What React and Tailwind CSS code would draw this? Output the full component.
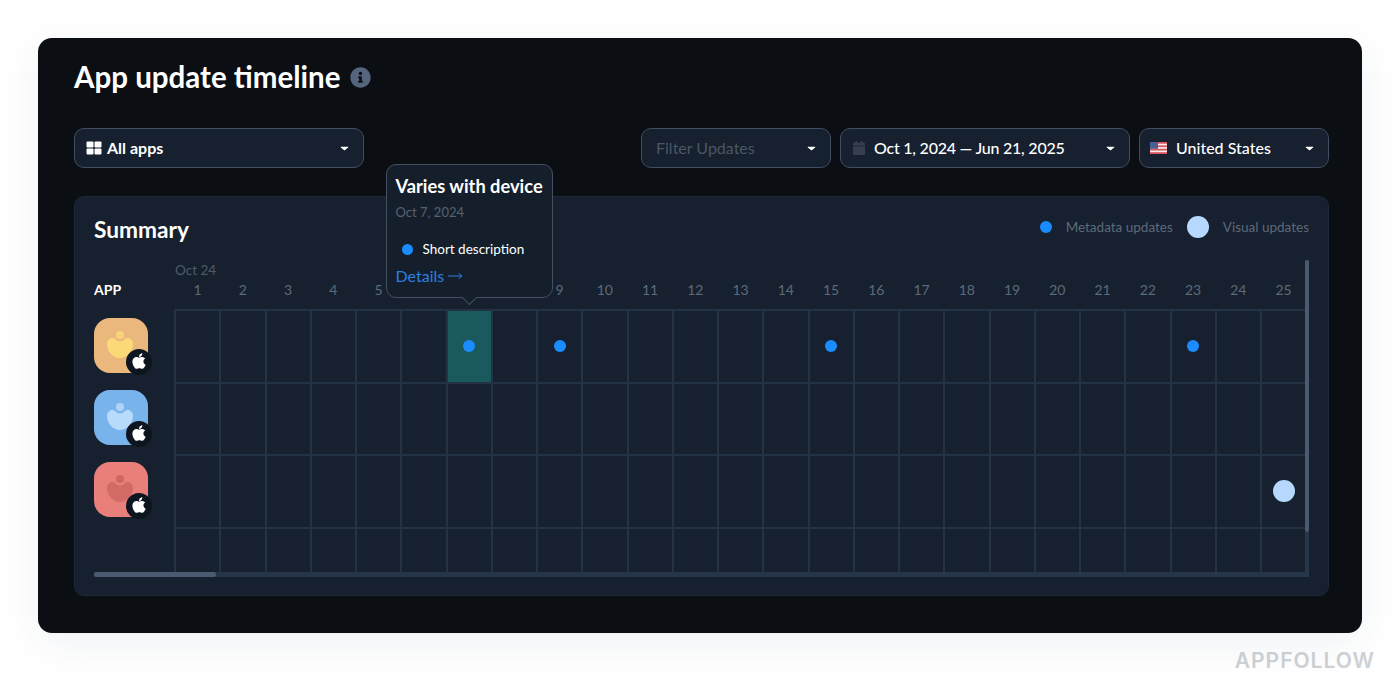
import { FaApple, FaInfoCircle, FaCalendar } from 'react-icons/fa';
import { MoveRight } from 'lucide-react';

const days = Array.from({ length: 25 }, (_, i) => i + 1);

// these day labels sit under the open tooltip
const coveredDays = [6, 7, 8];

const apps = [
    { bg: 'bg-[#eab87d]', head: '#f7d27a', body: '#fbd976', id: 'orange' },
    { bg: 'bg-[#79b3ec]', head: '#aed4f8', body: '#b9dbfb', id: 'blue' },
    { bg: 'bg-[#e87f7a]', head: '#cf6660', body: '#d26a65', id: 'red' },
];

// row index -> day -> dot kind
const updates = [
    { 7: 'meta', 9: 'meta', 15: 'meta', 23: 'meta' },
    {},
    { 25: 'visual' },
    {},
];

const rowHeights = ['h-[72.5px]', 'h-[72.5px]', 'h-[72.5px]', 'h-[46px]'];

function Caret() {
    return (
        <svg width="9" height="5" viewBox="0 0 10 6" className="shrink-0">
            <path d="M1 .8h8c.5 0 .8.6.4 1L5.4 5.2c-.2.2-.6.2-.8 0L.6 1.8C.2 1.4.5.8 1 .8z" fill="#ffffff" />
        </svg>
    );
}

function Select({ width, children }) {
    return (
        <div className={`${width} h-10 flex items-center justify-between pl-3 pr-[14px] rounded-[10px] bg-[#16202e] border border-[#414e60]`}>
            <div className="flex items-center text-[16px] whitespace-nowrap">{children}</div>
            <Caret />
        </div>
    );
}

function AppIcon({ app }) {
    return (
        <div className={`relative w-[54px] h-[55px] rounded-[16px] ${app.bg}`}>
            <svg width="54" height="55" viewBox="0 0 54 55" className="absolute inset-0">
                <circle cx="26" cy="17" r="4" fill={app.head} />
                <path d="M13 26c0-4 3-6.500 6-6 2.500.4 3 3.500 7 3.500s4.500-3.100 7-3.500c3-.5 6 2 6 6 0 7.500-6 14-13 14S13 33.500 13 26z" fill={app.body} />
            </svg>
            <div className="absolute left-[32px] top-[31px] w-[26px] h-[26px] rounded-full bg-[#0d151f] flex items-center justify-center">
                <FaApple className="text-white text-[18px] mb-px" />
            </div>
        </div>
    );
}

function Flag() {
    return (
        <svg width="17" height="12" viewBox="0 0 17 12" className="shrink-0 -ml-[2px]">
            <rect width="17" height="12" rx="1.500" fill="#f3ecec" />
            <rect y="0" width="17" height="1.700" fill="#d9525c" />
            <rect y="3.400" width="17" height="1.700" fill="#d9525c" />
            <rect y="6.800" width="17" height="1.700" fill="#d9525c" />
            <rect y="10.200" width="17" height="1.800" fill="#d9525c" />
            <rect width="8" height="6.800" fill="#4a5f96" />
        </svg>
    );
}

export default function App() {
    return (
        <div className="w-[1400px] h-[697px] overflow-hidden bg-white font-['Lato',sans-serif] pt-[38px] px-[38px]">
            <div className="relative h-[595px] rounded-[14px] bg-[#0b0e13] pt-[22px] pl-[36px] pr-[33px] shadow-[0_10px_40px_rgba(30,50,90,0.07)]">
                <div className="flex items-center gap-[10px] h-[34px]">
                    <h1 className="text-[29.5px] leading-[34px] font-bold text-white">App update timeline</h1>
                    <FaInfoCircle className="text-[#55657d] text-[21px]" />
                </div>

                <div className="mt-[34px] flex items-center">
                    <Select width="w-[290px]">
                        <svg width="16" height="14" viewBox="0 0 16 14" className="mr-[5px] -ml-[1px]" fill="#ffffff">
                            <rect x="0.500" y="0.500" width="7" height="6" rx="1" />
                            <rect x="8.500" y="0.500" width="7" height="6" rx="1" />
                            <rect x="0.500" y="7.500" width="7" height="6" rx="1" />
                            <rect x="8.500" y="7.500" width="7" height="6" rx="1" />
                        </svg>
                        <span className="font-bold text-white">All apps</span>
                    </Select>
                    <div className="ml-auto flex items-center gap-[9px]">
                        <Select width="w-[190px]">
                            <span className="pl-[2px] text-[#4a5666]">Filter Updates</span>
                        </Select>
                        <Select width="w-[290px]">
                            <FaCalendar className="text-[#353f4e] text-[14px] -ml-px mr-[8px]" />
                            <span className="tracking-[-0.23px] font-medium text-white">Oct 1, 2024 — Jun 21, 2025</span>
                        </Select>
                        <Select width="w-[190px]">
                            <Flag />
                            <span className="ml-[9px] font-medium text-white">United States</span>
                        </Select>
                    </div>
                </div>

                <div className="mt-[28px] h-[400px] rounded-[10px] bg-[#16202e] border border-[#1c2938] pl-[19px] pr-[19px]">
                    <div className="h-[63px] pt-[20px] flex items-start justify-between">
                        <h2 className="text-[22.7px] leading-[26px] font-bold text-white">Summary</h2>
                        <div className="flex items-center h-[22px] -mt-px text-[13.5px] text-[#5d6a7a]">
                            <span className="w-3 h-3 rounded-full bg-[#1a8cff]" />
                            <span className="ml-[14px]">Metadata updates</span>
                            <span className="ml-[14px] w-[22px] h-[22px] rounded-full bg-[#b7d8fd]" />
                            <span className="ml-[14px]">Visual updates</span>
                        </div>
                    </div>

                    <div className="relative h-[317px] overflow-hidden flex">
                        <div className="w-[80px] shrink-0">
                            <div className="h-[50px] pt-[22px] text-[14px] leading-4 font-bold text-white">APP</div>
                            {apps.map((app) => (
                                <div key={app.id} className="h-[72px] flex items-center pb-[2px]">
                                    <AppIcon app={app} />
                                </div>
                            ))}
                        </div>

                        <div className="w-[1131.25px] shrink-0">
                            <div className="h-[20px] pl-px text-[13.5px] leading-[20px] text-[#4e5b6b]">Oct 24</div>
                            <div className="h-[29px] pl-px grid grid-cols-[repeat(25,45.25px)] text-[14px] leading-[20px] text-[#5d6a7a] text-center">
                                {days.map((d) => (
                                    <div key={d}>{coveredDays.includes(d) ? '' : d}</div>
                                ))}
                            </div>
                            {updates.map((row, r) => (
                                <div key={r} className={`${rowHeights[r]} grid grid-cols-[repeat(25,45.25px)]`}>
                                    {days.map((d) => (
                                        <div
                                            key={d}
                                            className={`border-l-2 border-t-2 border-[#233244] flex items-center justify-center ${r === 0 && d === 7 ? 'bg-[#1a5a5f]' : ''}`}
                                        >
                                            {row[d] === 'meta' && <span className="w-3 h-3 rounded-full bg-[#1a8cff]" />}
                                            {row[d] === 'visual' && <span className="w-[22px] h-[22px] rounded-full bg-[#b7d8fd]" />}
                                        </div>
                                    ))}
                                </div>
                            ))}
                        </div>

                        {/* scrollbars */}
                        <div className="absolute left-0 right-0 bottom-0 h-[5px] bg-[#263548]">
                            <div className="w-[122px] h-full rounded-sm bg-[#4a5a70]" />
                        </div>
                        <div className="absolute right-0 top-0 bottom-0 w-[4px] bg-[#263548]">
                            <div className="h-[272px] w-full rounded-sm bg-[#4a5a70]" />
                        </div>
                    </div>
                </div>

                {/* tooltip */}
                <div className="absolute left-[348px] top-[126px] w-[167px] h-[134px] rounded-[10px] bg-[#151f2c] border border-[#445060] pt-[10px] px-[8.5px]">
                    <div className="text-[18.25px] leading-[22px] font-bold text-white whitespace-nowrap">Varies with device</div>
                    <div className="mt-[6px] text-[13px] leading-[18px] text-[#566272]">Oct 7, 2024</div>
                    <div className="mt-[18px] flex items-center h-[20px] text-[13.500px] text-white">
                        <span className="ml-[6px] w-[11px] h-[11px] rounded-full bg-[#1a8cff]" />
                        <span className="ml-[10px] whitespace-nowrap">Short description</span>
                    </div>
                    <div className="mt-[7px] flex items-center text-[16px] leading-[20px] text-[#2a7fe0]">
                        Details
                        <MoveRight className="w-[16px] h-[16px] ml-[3px]" strokeWidth={1.5} />
                    </div>
                    <div className="absolute left-[77px] bottom-[-6px] w-[11px] h-[11px] rotate-45 bg-[#151f2c] border-r border-b border-[#445060]" />
                </div>
            </div>

            <div className="flex justify-end mr-[-13px] mt-[14px]">
                <span className="font-['Inter',sans-serif] text-[21px] leading-[28px] font-semibold tracking-[1px] text-[#ced2d6]">APPFOLLOW</span>
            </div>
        </div>
    );
}
